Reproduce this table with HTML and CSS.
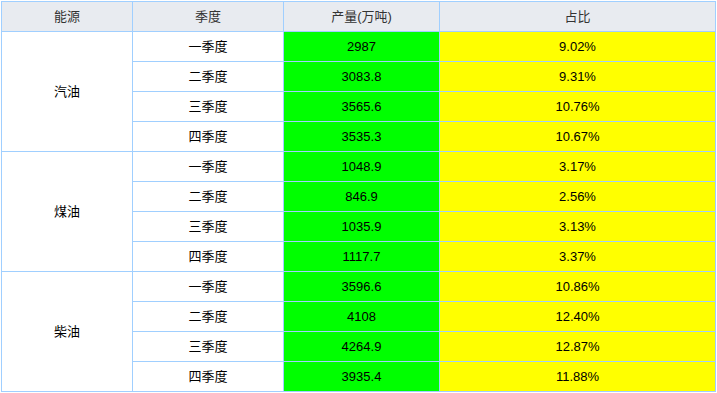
FILE: index.html
```html
<!DOCTYPE html>
<html lang="zh">
<head>
<meta charset="utf-8">
<link rel="stylesheet" href="styles.css">
</head>
<body>
<table class="tbl">
  <colgroup>
    <col class="c1"><col class="c2"><col class="c3"><col class="c4">
  </colgroup>
  <thead>
    <tr><th>能源</th><th>季度</th><th>产量(万吨)</th><th>占比</th></tr>
  </thead>
  <tbody>
    <tr><td class="src" rowspan="4">汽油</td><td>一季度</td><td class="g">2987</td><td class="y">9.02%</td></tr>
    <tr><td>二季度</td><td class="g">3083.8</td><td class="y">9.31%</td></tr>
    <tr><td>三季度</td><td class="g">3565.6</td><td class="y">10.76%</td></tr>
    <tr><td>四季度</td><td class="g">3535.3</td><td class="y">10.67%</td></tr>
    <tr><td class="src" rowspan="4">煤油</td><td>一季度</td><td class="g">1048.9</td><td class="y">3.17%</td></tr>
    <tr><td>二季度</td><td class="g">846.9</td><td class="y">2.56%</td></tr>
    <tr><td>三季度</td><td class="g">1035.9</td><td class="y">3.13%</td></tr>
    <tr><td>四季度</td><td class="g">1117.7</td><td class="y">3.37%</td></tr>
    <tr><td class="src" rowspan="4">柴油</td><td>一季度</td><td class="g">3596.6</td><td class="y">10.86%</td></tr>
    <tr><td>二季度</td><td class="g">4108</td><td class="y">12.40%</td></tr>
    <tr><td>三季度</td><td class="g">4264.9</td><td class="y">12.87%</td></tr>
    <tr><td>四季度</td><td class="g">3935.4</td><td class="y">11.88%</td></tr>
  </tbody>
</table>
</body>
</html>
```
FILE: styles.css
```css
html, body {
  margin: 0;
  padding: 0;
  background: #ffffff;
}
body {
  padding: 1px 0 0 1px;
  font-family: "Liberation Sans", "Noto Sans CJK SC", sans-serif;
  font-size: 13px;
  color: #000;
}
.tbl {
  border-collapse: collapse;
  table-layout: fixed;
  width: 715px;
}
.c1 { width: 131px; }
.c2 { width: 151px; }
.c3 { width: 156px; }
.c4 { width: auto; }
.tbl th, .tbl td {
  border: 1px solid #a0cfff;
  text-align: center;
  vertical-align: middle;
  padding: 0;
  height: 29px;
  line-height: 16px;
}
.tbl th {
  background: #e8ebf0;
  font-weight: normal;
  color: #333;
}
.tbl .g { background: #00ff00; }
.tbl .y { background: #ffff00; }
.tbl .src { background: #fff; }
```
